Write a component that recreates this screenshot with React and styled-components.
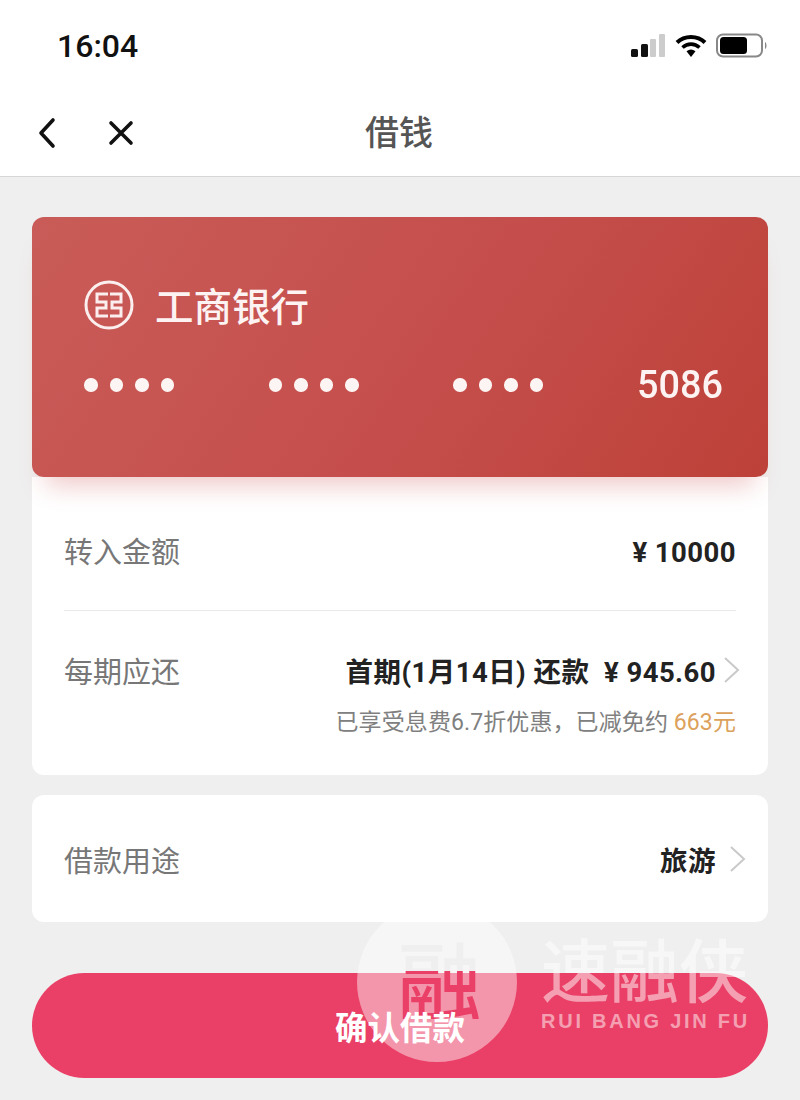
import styled, { createGlobalStyle } from 'styled-components';

const cjk = `"Noto Sans CJK SC", sans-serif`;
const latin = `Roboto, "Noto Sans CJK SC", sans-serif`;

const GlobalStyle = createGlobalStyle`
    html, body {
        margin: 0;
        padding: 0;
        background: #efefef;
    }
    * {
        box-sizing: border-box;
    }
`;

export default function App() {
    return (
        <Page>
            <GlobalStyle />
            <StatusBar>
                <Clock>16:04</Clock>
                <StatusIcons>
                    <svg width="36" height="24" viewBox="0 0 36 24">
                        <rect x="1" y="15" width="7" height="8" rx="1.5" fill="#111" />
                        <rect x="11" y="10" width="7" height="13" rx="1.5" fill="#111" />
                        <rect x="20" y="5" width="6" height="18" rx="1" fill="#ccc" />
                        <rect x="29" y="0" width="6" height="23" rx="1" fill="#ccc" />
                    </svg>
                    <svg width="32" height="24" viewBox="0 0 32 24">
                        <path d="M2 8.5 C9.5 1 22.5 1 30 8.5" stroke="#000" strokeWidth="4" fill="none" />
                        <path d="M7.5 13.5 C12.5 9 19.5 9 24.5 13.5" stroke="#000" strokeWidth="3.6" fill="none" />
                        <path d="M11.5 17.2 C14.5 15 17.5 15 20.5 17.2 L16 23 Z" fill="#000" />
                    </svg>
                    <svg width="52" height="26" viewBox="0 0 52 26">
                        <rect x="1" y="1.5" width="45" height="22" rx="6" fill="#fff" stroke="#888" strokeWidth="2" />
                        <rect x="4" y="4" width="27" height="17" rx="3.5" fill="#000" />
                        <path d="M49 9 C51 10 51 15 49 16 Z" fill="#888" />
                    </svg>
                </StatusIcons>
            </StatusBar>
            <NavBar>
                <NavIcons>
                    <svg width="22" height="32" viewBox="0 0 22 32">
                        <path d="M17 3 L5 16 L17 29" stroke="#111" strokeWidth="3.6" fill="none" strokeLinecap="round" strokeLinejoin="round" />
                    </svg>
                    <svg width="26" height="26" viewBox="0 0 26 26">
                        <path d="M3 3 L23 23 M23 3 L3 23" stroke="#111" strokeWidth="3.6" fill="none" strokeLinecap="round" />
                    </svg>
                </NavIcons>
                <NavTitle>借钱</NavTitle>
            </NavBar>
            <Content>
                <BankCard>
                    <BankName>
                        <svg width="50" height="50" viewBox="0 0 50 50">
                            <circle cx="25" cy="25" r="23" stroke="#fbeeee" strokeWidth="3" fill="none" />
                            <path d="M24 14 H13 V22 H22 V28 H13 V36 H24 M26 14 H37 V22 H28 V28 H37 V36 H26" stroke="#fbeeee" strokeWidth="3" fill="none" />
                        </svg>
                        <BankTitle>工商银行</BankTitle>
                    </BankName>
                    <CardNumber>
                        <DotGroup>
                            <Dot /><Dot /><Dot /><Dot />
                        </DotGroup>
                        <DotGroup>
                            <Dot /><Dot /><Dot /><Dot />
                        </DotGroup>
                        <DotGroup>
                            <Dot /><Dot /><Dot /><Dot />
                        </DotGroup>
                        <LastDigits>5086</LastDigits>
                    </CardNumber>
                </BankCard>
                <DetailPanel>
                    <AmountRow>
                        <Label>转入金额</Label>
                        <AmountValue>¥ 10000</AmountValue>
                    </AmountRow>
                    <RepayRow>
                        <RepayLine>
                            <Label>每期应还</Label>
                            <ValueWrap $gap={7}>
                                <Value>首期(1月14日) 还款 &nbsp;¥ 945.60</Value>
                                <Chevron />
                            </ValueWrap>
                        </RepayLine>
                        <Discount>已享受息费6.7折优惠，已减免约 <Highlight>663元</Highlight></Discount>
                    </RepayRow>
                </DetailPanel>
                <PurposePanel>
                    <Label>借款用途</Label>
                    <ValueWrap $gap={13}>
                        <Value>旅游</Value>
                        <Chevron />
                    </ValueWrap>
                </PurposePanel>
                <ConfirmButton><ConfirmLabel>确认借款</ConfirmLabel></ConfirmButton>
            </Content>
            <Watermark>
                <MarkCircle><MarkGlyph>融</MarkGlyph></MarkCircle>
                <MarkBrand>
                    <MarkName>速融侠</MarkName>
                    <MarkSub>RUI BANG JIN FU</MarkSub>
                </MarkBrand>
            </Watermark>
        </Page>
    );
}

function Chevron() {
    return (
        <svg width="18" height="28" viewBox="0 0 18 28">
            <path d="M2 2 L15 14 L2 26" stroke="#c9c9c9" strokeWidth="2" fill="none" />
        </svg>
    );
}

const Page = styled.div`
    position: relative;
    width: 800px;
    height: 1100px;
    overflow: hidden;
    background: #efefef;
`;

const StatusBar = styled.div`
    height: 90px;
    background: #fff;
    display: flex;
    align-items: flex-start;
    justify-content: space-between;
    padding: 26px 32px 0 57px;
`;

const Clock = styled.span`
    font-family: Roboto, sans-serif;
    font-size: 32px;
    line-height: 40px;
    font-weight: 500;
    color: #111;
`;

const StatusIcons = styled.div`
    display: flex;
    align-items: center;
    gap: 9px;
    padding-top: 7px;
`;

const NavBar = styled.div`
    position: relative;
    height: 87px;
    background: #fff;
    border-bottom: 1px solid #d6d6d6;
    display: flex;
    align-items: center;
    justify-content: center;
`;

const NavIcons = styled.div`
    position: absolute;
    left: 36px;
    top: 27px;
    display: flex;
    align-items: center;
    gap: 50px;
`;

const NavTitle = styled.h1`
    margin: 0 2px 6px 0;
    font-family: ${cjk};
    font-size: 34px;
    font-weight: 500;
    color: #555;
`;

const Content = styled.div`
    padding: 40px 32px 0;
    display: flex;
    flex-direction: column;
`;

const BankCard = styled.div`
    position: relative;
    z-index: 1;
    height: 260px;
    border-radius: 12px;
    padding: 63px 46px 0 52px;
    background: linear-gradient(125deg, #c95c58 0%, #c54e4c 55%, #bd4138 100%);
    box-shadow: 0 22px 24px -14px rgba(205, 80, 80, 0.32);
`;

const BankName = styled.div`
    display: flex;
    align-items: center;
    gap: 21px;
`;

const BankTitle = styled.span`
    margin-top: -3px;
    font-family: ${cjk};
    font-size: 38.5px;
    line-height: 50px;
    font-weight: 500;
    color: #fdf3f2;
`;

const CardNumber = styled.div`
    margin-top: 30px;
    display: flex;
    align-items: center;
`;

const DotGroup = styled.div`
    display: flex;
    gap: 12px;
    margin-right: 94.5px;
`;

const Dot = styled.span`
    width: 13.5px;
    height: 13.5px;
    border-radius: 50%;
    background: #fdf5f4;
`;

const LastDigits = styled.span`
    margin-left: -1px;
    font-family: ${latin};
    font-size: 39px;
    line-height: 50px;
    font-weight: 500;
    color: #fdf3f2;
    transform: scaleX(0.97);
    transform-origin: left center;
`;

const DetailPanel = styled.section`
    height: 298px;
    background: #fff;
    border-radius: 0 0 12px 12px;
    padding: 0 32px;
`;

const AmountRow = styled.div`
    height: 134px;
    padding-top: 13px;
    display: flex;
    align-items: center;
    justify-content: space-between;
    border-bottom: 1px solid #e9e9e9;
`;

const RepayRow = styled.div`
    padding-top: 37px;
`;

const RepayLine = styled.div`
    position: relative;
    display: flex;
    align-items: center;
    justify-content: space-between;
    height: 44px;
`;

const Label = styled.span`
    font-family: ${cjk};
    font-size: 29px;
    font-weight: 400;
    color: #777;
`;

const Value = styled.span`
    font-family: ${latin};
    font-size: 27.5px;
    font-weight: 700;
    letter-spacing: 0.45px;
    color: #222;
    white-space: nowrap;
`;

const AmountValue = styled(Value)`
    margin-top: 5px;
`;

const ValueWrap = styled.div`
    display: flex;
    align-items: center;
    gap: ${(props) => props.$gap}px;
    margin-right: -5px;
`;

const Discount = styled.div`
    margin-top: 15px;
    text-align: right;
    font-family: ${latin};
    font-size: 23px;
    line-height: 32px;
    letter-spacing: 0.1px;
    color: #808080;
    white-space: nowrap;
`;

const Highlight = styled.span`
    color: #dca15c;
`;

const PurposePanel = styled.section`
    margin-top: 20px;
    height: 127px;
    background: #fff;
    border-radius: 12px;
    padding: 0 26px 0 32px;
    display: flex;
    align-items: center;
    justify-content: space-between;
`;

const ConfirmButton = styled.button`
    margin-top: 51px;
    height: 105px;
    border: none;
    border-radius: 53px;
    background: #ea3f66;
`;

const ConfirmLabel = styled.span`
    position: relative;
    z-index: 3;
    font-family: ${cjk};
    font-size: 32.5px;
    font-weight: 700;
    color: #fff;
`;

const Watermark = styled.div`
    position: absolute;
    z-index: 2;
    left: 357px;
    top: 902px;
    display: flex;
    align-items: flex-start;
    gap: 24px;
    pointer-events: none;
`;

const MarkCircle = styled.div`
    width: 160px;
    height: 160px;
    padding: 0 0 10px 5px;
    border-radius: 50%;
    background: rgba(255, 255, 255, 0.45);
    display: flex;
    align-items: center;
    justify-content: center;
`;

const MarkGlyph = styled.span`
    font-family: ${cjk};
    font-size: 84px;
    line-height: 84px;
    font-weight: 500;
    color: transparent;
    background: linear-gradient(#efefef 36px, #ea3f66 36px);
    background-clip: text;
    -webkit-background-clip: text;
`;

const MarkBrand = styled.div`
    display: flex;
    flex-direction: column;
    align-items: flex-start;
    padding-top: 22px;
    color: rgba(255, 255, 255, 0.5);
`;

const MarkName = styled.span`
    font-family: ${cjk};
    font-size: 69px;
    line-height: 86px;
    font-weight: 500;
    white-space: nowrap;
`;

const MarkSub = styled.span`
    font-family: "Liberation Sans", sans-serif;
    font-size: 20px;
    line-height: 22px;
    font-weight: 700;
    letter-spacing: 2.75px;
    white-space: nowrap;
`;
